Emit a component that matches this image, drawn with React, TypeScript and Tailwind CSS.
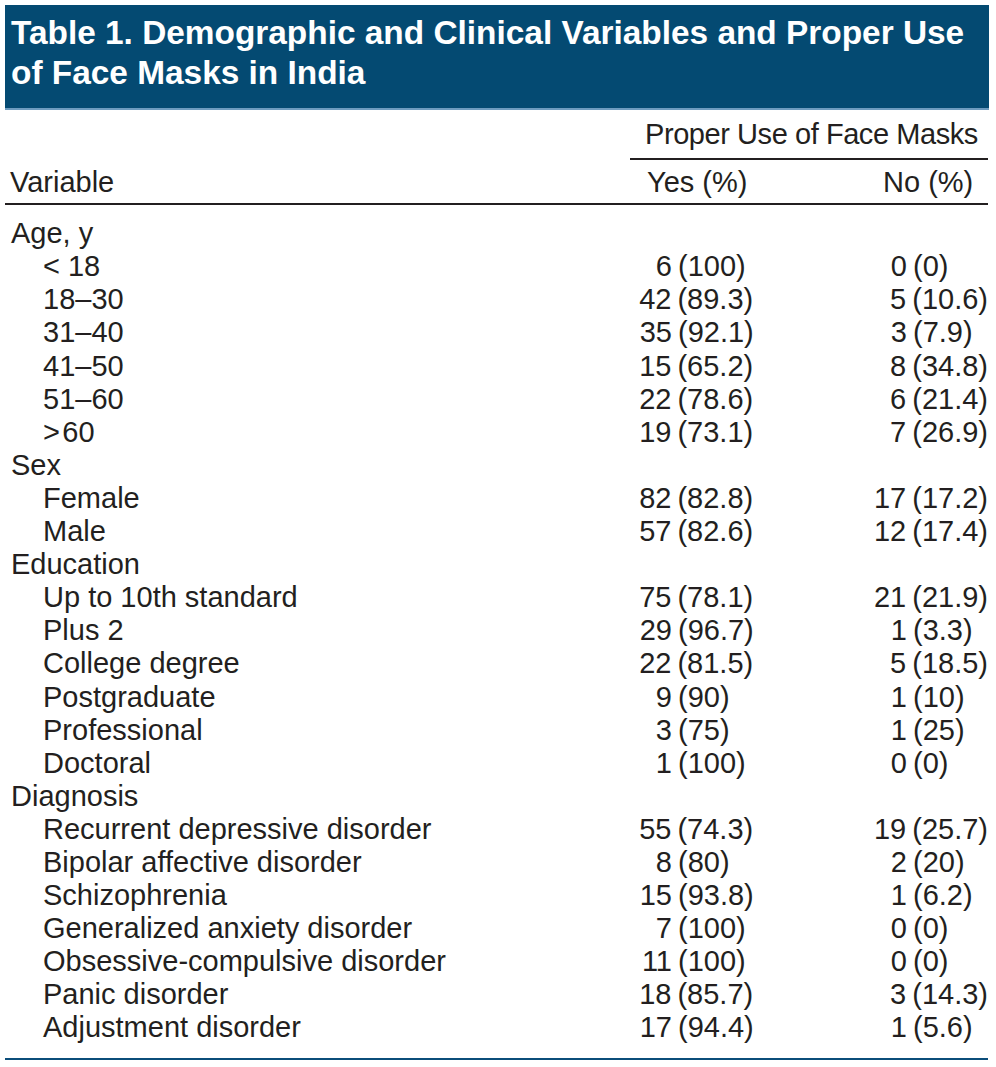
const rows: { label: string; sub?: boolean; yes?: [string, string]; no?: [string, string] }[] = [
  { label: "Age, y" },
  { label: "< 18", sub: true, yes: ["6", "(100)"], no: ["0", "(0)"] },
  { label: "18–30", sub: true, yes: ["42", "(89.3)"], no: ["5", "(10.6)"] },
  { label: "31–40", sub: true, yes: ["35", "(92.1)"], no: ["3", "(7.9)"] },
  { label: "41–50", sub: true, yes: ["15", "(65.2)"], no: ["8", "(34.8)"] },
  { label: "51–60", sub: true, yes: ["22", "(78.6)"], no: ["6", "(21.4)"] },
  { label: ">\u200a60", sub: true, yes: ["19", "(73.1)"], no: ["7", "(26.9)"] },
  { label: "Sex" },
  { label: "Female", sub: true, yes: ["82", "(82.8)"], no: ["17", "(17.2)"] },
  { label: "Male", sub: true, yes: ["57", "(82.6)"], no: ["12", "(17.4)"] },
  { label: "Education" },
  { label: "Up to 10th standard", sub: true, yes: ["75", "(78.1)"], no: ["21", "(21.9)"] },
  { label: "Plus 2", sub: true, yes: ["29", "(96.7)"], no: ["1", "(3.3)"] },
  { label: "College degree", sub: true, yes: ["22", "(81.5)"], no: ["5", "(18.5)"] },
  { label: "Postgraduate", sub: true, yes: ["9", "(90)"], no: ["1", "(10)"] },
  { label: "Professional", sub: true, yes: ["3", "(75)"], no: ["1", "(25)"] },
  { label: "Doctoral", sub: true, yes: ["1", "(100)"], no: ["0", "(0)"] },
  { label: "Diagnosis" },
  { label: "Recurrent depressive disorder", sub: true, yes: ["55", "(74.3)"], no: ["19", "(25.7)"] },
  { label: "Bipolar affective disorder", sub: true, yes: ["8", "(80)"], no: ["2", "(20)"] },
  { label: "Schizophrenia", sub: true, yes: ["15", "(93.8)"], no: ["1", "(6.2)"] },
  { label: "Generalized anxiety disorder", sub: true, yes: ["7", "(100)"], no: ["0", "(0)"] },
  { label: "Obsessive-compulsive disorder", sub: true, yes: ["11", "(100)"], no: ["0", "(0)"] },
  { label: "Panic disorder", sub: true, yes: ["18", "(85.7)"], no: ["3", "(14.3)"] },
  { label: "Adjustment disorder", sub: true, yes: ["17", "(94.4)"], no: ["1", "(5.6)"] },
];

function Cell({ value, numWidth }: { value?: [string, string]; numWidth: string }) {
  if (!value) return null;
  return (
    <div className="flex">
      <span className={`${numWidth} text-right`}>{value[0]}</span>
      <span className="ml-[6px]">{value[1]}</span>
    </div>
  );
}

export default function App() {
  return (
    <div className="w-[996px] h-[1067px] bg-white text-[#231f20] font-['Liberation_Sans',Arial,sans-serif] pt-[5px]">
      {/* Title band */}
      <div className="ml-[5px] w-[984px] bg-[#044a72] border-b-2 border-[#6e9cc0] pt-[8px] pb-[15px] pl-[6px]">
        <h1 className="text-white font-bold text-[33.4px] leading-[40px]">
          Table 1. Demographic and Clinical Variables and Proper Use
          <br />
          of Face Masks in India
        </h1>
      </div>

      <div className="ml-[5px] w-[983px] text-[29px] leading-[33.1px]">
        {/* Column headers */}
        <div className="pt-[8px] flex">
          <div className="w-[625px]" />
          <div className="flex-1 whitespace-nowrap tracking-[-0.015em] border-b-2 border-[#231f20] pl-[15px] pb-[7px]">
            Proper Use of Face Masks
          </div>
        </div>
        <div className="flex mt-[6px] pb-[4px] border-b-2 border-[#231f20]">
          <div className="w-[625px] pl-[5px]">Variable</div>
          <div className="w-[230px] pl-[17px]">Yes (%)</div>
          <div className="flex-1 pl-[23px]">No (%)</div>
        </div>

        {/* Body */}
        <div className="pt-[12px] pb-[13px] border-b-2 border-[#0b4d7a]">
          {rows.map((r) => (
            <div key={r.label} className="flex h-[33.1px]">
              <div className={`w-[625px] whitespace-nowrap ${r.sub ? "pl-[38px]" : "pl-[6px]"}`}>{r.label}</div>
              <div className="w-[230px]">
                <Cell value={r.yes} numWidth="w-[42px]" />
              </div>
              <div className="flex-1">
                <Cell value={r.no} numWidth="w-[47px]" />
              </div>
            </div>
          ))}
        </div>
      </div>
    </div>
  );
}
